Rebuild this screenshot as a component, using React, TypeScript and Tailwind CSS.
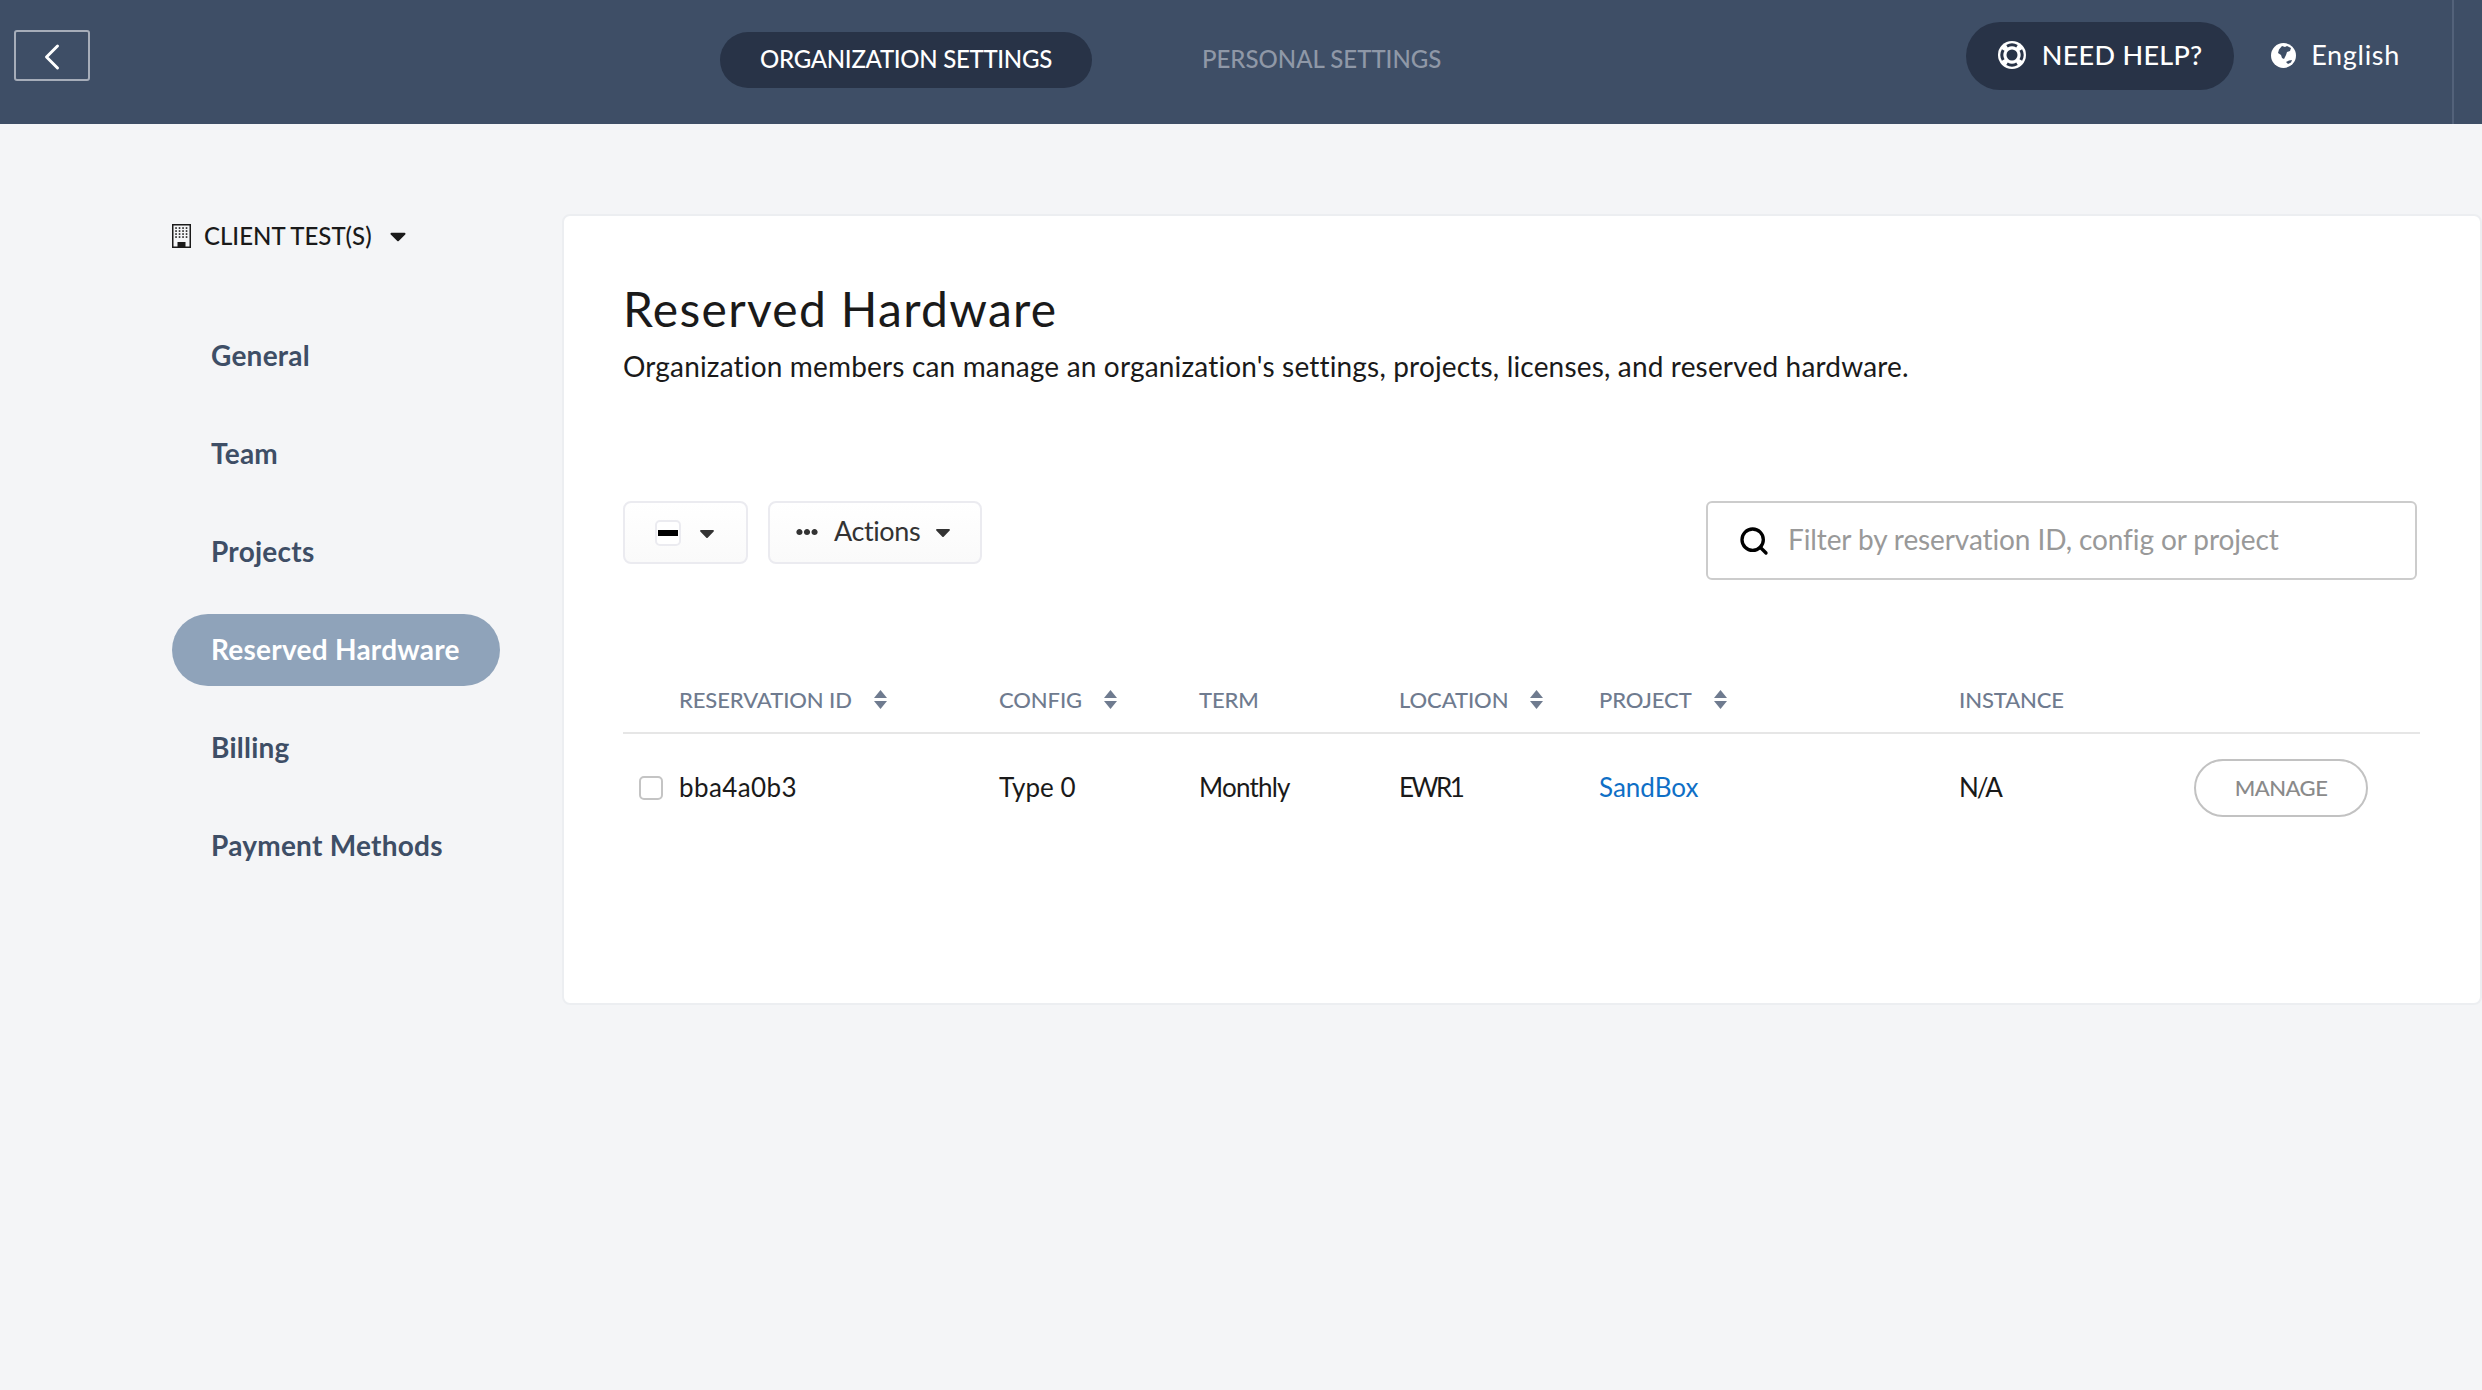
import { ChevronLeft, Search } from "lucide-react";
import { FaCaretDown, FaEllipsisH } from "react-icons/fa";

const navItems = ["General", "Team", "Projects", "Reserved Hardware", "Billing", "Payment Methods"];

const tableCols = "grid grid-cols-[56px_320px_200px_200px_200px_360px_1fr] items-center";

const BuildingIcon = () => (
  <svg width="19" height="24" viewBox="0 0 19 24" className="shrink-0">
    <rect x="0.75" y="0.75" width="17.5" height="22.5" fill="#f4f5f7" stroke="#1a1a1a" strokeWidth="1.5" />
    {[4, 7, 10, 13].map((y) =>
      [4, 7.5, 11, 14.5].map((x) => <rect key={`${x}-${y}`} x={x - 0.75} y={y - 0.75} width="1.6" height="1.6" fill="#1a1a1a" />),
    )}
    <path d="M5.5 23v-5h8v5z" fill="#1a1a1a" />
  </svg>
);

const LifeRingIcon = () => (
  <svg width="28" height="28" viewBox="0 0 28 28" className="shrink-0">
    <circle cx="14" cy="14" r="14" fill="#fff" />
    {[0, 90, 180, 270].map((deg) => (
      <path key={deg} d="M9 5.2A10.2 10.2 0 0 1 19 5.2" fill="none" stroke="#283347" strokeWidth="3" transform={`rotate(${deg} 14 14)`} />
    ))}
    <circle cx="14" cy="14" r="5.5" fill="#283347" />
  </svg>
);

const GlobeIcon = () => (
  <svg width="25" height="25" viewBox="0 0 25 25" className="shrink-0">
    <circle cx="12.5" cy="12.5" r="12.5" fill="#fff" />
    <path d="M8 6.5 11 3l3 1 2-1 4 2-1 3-3 1-1 3-2 4-2-1-1-3-3-2z" fill="#3e4e66" />
    <path d="M15 19l3-1.5 3-.5-1 2.5-3 1.5z" fill="#3e4e66" />
  </svg>
);

const SortIcon = () => (
  <svg width="13" height="19" viewBox="0 0 13 19" className="shrink-0">
    <path d="M6.5 0 13 8H0zM0 11h13l-6.5 8z" fill="#6f7b8f" />
  </svg>
);

const SortHeader = ({ label }: { label: string }) => (
  <div className="flex items-center gap-[22px]">
    <span>{label}</span>
    <SortIcon />
  </div>
);

export default function App() {
  return (
    <div className="min-h-[1390px] bg-[#f4f5f7] font-['Lato','Liberation_Sans',sans-serif] text-[#1a1a1a]">
      <header className="relative flex h-[124px] items-start bg-[#3e4e66]">
        <button className="ml-[14px] mt-[30px] flex h-[51px] w-[76px] items-center justify-center rounded-[3px] border-2 border-[#a6adb9] pt-[2px] text-white">
          <ChevronLeft className="h-[44px] w-[44px]" strokeWidth={1.6} />
        </button>
        <nav className="ml-[630px] mt-[32px] flex items-center gap-[110px] text-[24px] font-medium">
          <a className="flex h-[56px] w-[372px] items-center justify-center rounded-full bg-[#283347] pb-[3px] tracking-[-0.3px] text-white">ORGANIZATION SETTINGS</a>
          <a className="pb-[3px] text-[#8f98a7]">PERSONAL SETTINGS</a>
        </nav>
        <div className="ml-auto mr-[82px] mt-[22px] flex items-center">
          <a className="flex h-[68px] w-[268px] items-center justify-center gap-[16px] rounded-full bg-[#283347] pb-[2px] text-[27px] font-medium tracking-[0.3px] text-white">
            <LifeRingIcon />
            NEED HELP?
          </a>
          <a className="ml-[37px] flex items-center gap-[15px] pb-[2px] text-[27px] tracking-[0.7px] text-white">
            <GlobeIcon />
            English
          </a>
        </div>
        <div className="absolute bottom-0 left-[2452px] top-0 w-[2px] bg-[#53627a]" />
      </header>

      <div className="flex pt-[90px]">
        <aside className="w-[562px] shrink-0 pl-[172px]">
          <div className="flex h-[44px] items-center text-[24px] font-medium">
            <BuildingIcon />
            <span className="ml-[13px] pb-[1px]">CLIENT TEST(S)</span>
            <FaCaretDown className="ml-[13px] h-[26px] w-[26px]" />
          </div>
          <ul className="mt-[62px] flex w-[328px] flex-col gap-[26px]">
            {navItems.map((item) => (
              <li
                key={item}
                className={`flex h-[72px] items-center rounded-full pb-[2px] pl-[39px] text-[28px] font-bold tracking-[0.25px] ${
                  item === "Reserved Hardware" ? "bg-[#8fa3ba] text-white" : "text-[#3e4e66]"
                }`}
              >
                {item}
              </li>
            ))}
          </ul>
        </aside>

        <main className="h-[791px] flex-1 rounded-[8px] border-2 border-[#eceef1] bg-white pl-[59px] pr-[60px] pt-[63px]">
          <h1 className="text-[48px] leading-[60px] tracking-[1.3px]">Reserved Hardware</h1>
          <p className="mt-[9px] text-[28px] leading-[36px] tracking-[0.17px]">
            Organization members can manage an organization's settings, projects, licenses, and reserved hardware.
          </p>

          <div className="mt-[117px] flex items-start">
            <button className="flex h-[63px] w-[125px] items-center justify-center gap-[14px] rounded-[8px] border-2 border-[#ebebf0] bg-gradient-to-b from-white to-[#fafafa] pl-[3px]">
              <span className="flex h-[26px] w-[26px] items-center justify-center rounded-[5px] border-2 border-[#ebebf0] bg-white">
                <span className="h-[6px] w-[20px] shrink-0 bg-black" />
              </span>
              <FaCaretDown className="h-6 w-6 text-[#333]" />
            </button>
            <button className="ml-[20px] flex h-[63px] w-[214px] items-center rounded-[8px] border-2 border-[#ebebf0] bg-gradient-to-b from-white to-[#fafafa] pb-[2px] pl-[26px] text-[27px] tracking-[-0.4px] text-[#333]">
              <FaEllipsisH className="h-[22px] w-[22px]" />
              <span className="ml-[16px]">Actions</span>
              <FaCaretDown className="ml-[11px] h-6 w-6" />
            </button>
            <div className="ml-auto mr-[3px] flex h-[79px] w-[711px] items-center rounded-[6px] border-2 border-[#ccc] pl-[30px]">
              <Search className="h-8 w-8 text-black" strokeWidth={2.5} />
              <span className="ml-[18px] pb-[3px] text-[28px] tracking-[-0.1px] text-[#999]">Filter by reservation ID, config or project</span>
            </div>
          </div>

          <div className={`${tableCols} mt-[81px] h-[73px] border-b-2 border-[#e6e6e6] pt-[6px] text-[22px] font-medium tracking-[-0.1px] text-[#6f7b8f]`}>
            <span />
            <SortHeader label="RESERVATION ID" />
            <SortHeader label="CONFIG" />
            <span>TERM</span>
            <SortHeader label="LOCATION" />
            <SortHeader label="PROJECT" />
            <span>INSTANCE</span>
          </div>

          <div className={`${tableCols} h-[107px] text-[26px]`}>
            <span className="ml-[16px] h-[24px] w-[24px] rounded-[5px] border-2 border-[#c4c4c4] bg-white" />
            <span className="tracking-[0.4px]">bba4a0b3</span>
            <span>Type 0</span>
            <span className="tracking-[-0.8px]">Monthly</span>
            <span className="tracking-[-2.5px]">EWR1</span>
            <a className="text-[#0f6fc6]">SandBox</a>
            <div className="flex items-center justify-between pr-[52px]">
              <span className="tracking-[-2px]">N/A</span>
              <button className="flex h-[58px] w-[174px] items-center justify-center rounded-full border-2 border-[#c2c2c2] text-[22px] font-medium tracking-[-0.5px] text-[#8a8a8a]">
                MANAGE
              </button>
            </div>
          </div>
        </main>
      </div>
    </div>
  );
}
